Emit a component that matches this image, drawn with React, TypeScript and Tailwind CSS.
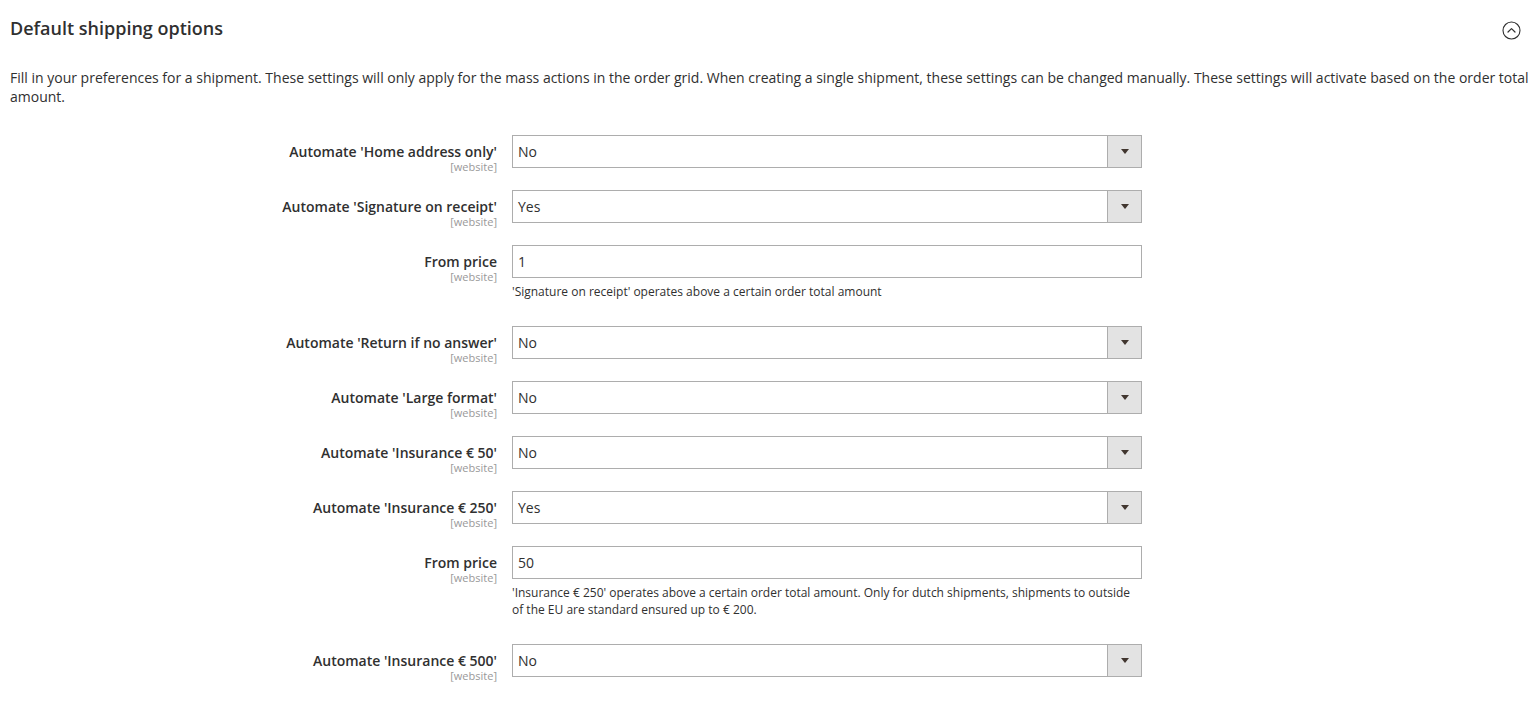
import React from 'react'

type Field = {
  label: string
  kind: 'select' | 'input'
  value: string
  note?: string
}

const fields: Field[] = [
  { label: "Automate 'Home address only'", kind: 'select', value: 'No' },
  { label: "Automate 'Signature on receipt'", kind: 'select', value: 'Yes' },
  {
    label: 'From price',
    kind: 'input',
    value: '1',
    note: "'Signature on receipt' operates above a certain order total amount",
  },
  { label: "Automate 'Return if no answer'", kind: 'select', value: 'No' },
  { label: "Automate 'Large format'", kind: 'select', value: 'No' },
  { label: "Automate 'Insurance € 50'", kind: 'select', value: 'No' },
  { label: "Automate 'Insurance € 250'", kind: 'select', value: 'Yes' },
  {
    label: 'From price',
    kind: 'input',
    value: '50',
    note: "'Insurance € 250' operates above a certain order total amount. Only for dutch shipments, shipments to outside of the EU are standard ensured up to € 200.",
  },
  { label: "Automate 'Insurance € 500'", kind: 'select', value: 'No' },
]

function CollapseIcon() {
  return (
    <svg width="19" height="19" viewBox="0 0 19 19" fill="none">
      <circle cx="9.5" cy="9.5" r="8.5" stroke="#303030" strokeWidth="1.1" />
      <path d="M6 11 L9.5 7.6 L13 11" stroke="#303030" strokeWidth="1.2" strokeLinecap="round" strokeLinejoin="round" />
    </svg>
  )
}

function ConfigRow({ field }: { field: Field }) {
  return (
    <div className={`flex items-start ${field.note ? 'mb-[26px]' : 'mb-[22px]'}`}>
      <div className="w-[487px] h-[33px] shrink-0 text-right pt-[7px]">
        <div className="text-[14px] leading-[19px] font-semibold text-[#303030]">{field.label}</div>
        <div className="text-[11px] leading-[12px] text-[#999999]">[website]</div>
      </div>
      <div className="ml-[15px] w-[630px] shrink-0">
        {field.kind === 'select' ? (
          <div className="flex h-[33px] border border-[#adadad] bg-white">
            <div className="flex-1 pl-[5px] flex items-center text-[14px] text-[#303030]">{field.value}</div>
            <div className="w-[34px] border-l border-[#adadad] bg-[#e3e3e3] flex items-center justify-center">
              <div className="w-0 h-0 border-l-[4px] border-r-[4px] border-t-[5px] border-l-transparent border-r-transparent border-t-[#41362f]" />
            </div>
          </div>
        ) : (
          <div className="h-[33px] border border-[#adadad] bg-white pl-[5px] flex items-center text-[14px] text-[#303030]">
            {field.value}
          </div>
        )}
        {field.note && (
          <div className="mt-[5px] text-[12px] leading-[17px] text-[#303030]">{field.note}</div>
        )}
      </div>
    </div>
  )
}

export default function App() {
  return (
    <div className="min-h-[705px] bg-white pl-[10px] font-['Open_Sans',sans-serif]">
      <div className="flex items-center justify-between h-[56px]">
        <h2 className="text-[18px] font-semibold text-[#303030]">Default shipping options</h2>
        <div className="mr-[15px] mt-[4px]">
          <CollapseIcon />
        </div>
      </div>
      <p className="text-[14px] leading-[19px] text-[#303030] pt-[12px]">
        Fill in your preferences for a shipment. These settings will only apply for the mass actions in the order grid. When creating a single shipment, these settings can be changed manually. These settings will activate based on the order total amount.
      </p>
      <div className="mt-[29px]">
        {fields.map((f, i) => (
          <ConfigRow key={i} field={f} />
        ))}
      </div>
    </div>
  )
}
